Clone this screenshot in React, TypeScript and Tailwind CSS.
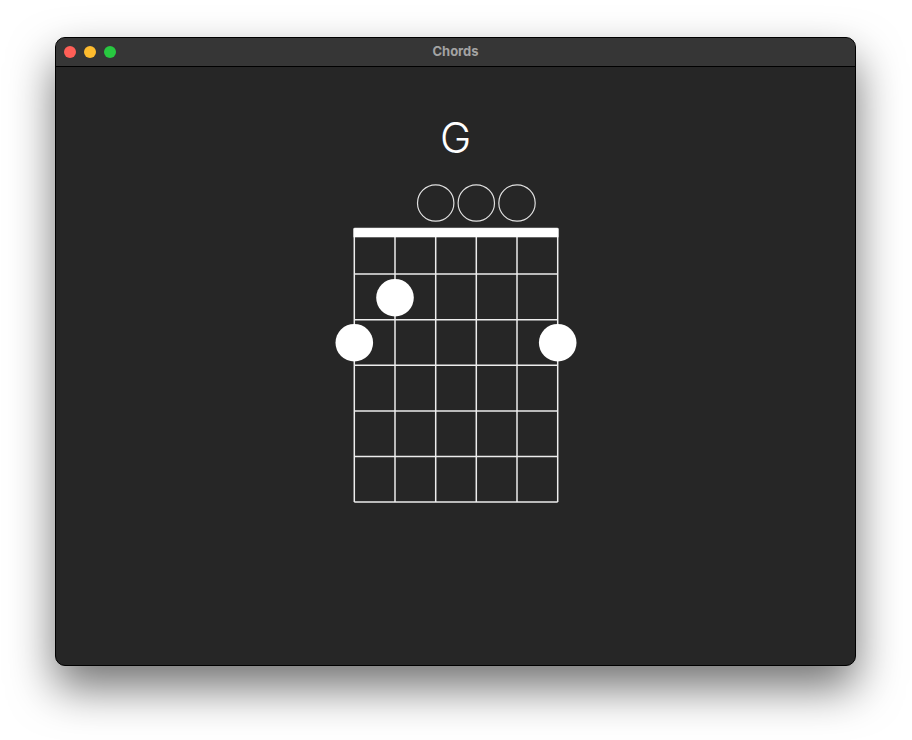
import React from "react";

const strings = [28.3, 69, 109.7, 150.3, 191, 231.7];
const frets = [68.5, 114.1, 159.7, 205.3, 250.9, 296.5, 342.1];

function ChordDiagram() {
  return (
    <svg width="260" height="350" viewBox="0 0 260 350" className="block">
      {strings.map((x, i) => (
        <line key={"s" + i} x1={x} y1={68.5} x2={x} y2={342.1} stroke="#ededed" strokeWidth={1.5} />
      ))}
      {frets.map((y, i) => (
        <line key={"f" + i} x1={28.3} y1={y} x2={231.7} y2={y} stroke="#ededed" strokeWidth={1.5} />
      ))}
      <rect x={27.5} y={68.3} width={205} height={9} fill="#ffffff" />
      {[109.7, 150.3, 191].map((cx, i) => (
        <circle key={"o" + i} cx={cx} cy={43} r={18.2} fill="none" stroke="#e0e0e0" strokeWidth={1.2} />
      ))}
      <circle cx={69} cy={137.7} r={18.8} fill="#ffffff" />
      <circle cx={28.3} cy={182.7} r={18.8} fill="#ffffff" />
      <circle cx={231.7} cy={182.7} r={18.8} fill="#ffffff" />
    </svg>
  );
}

export default function App() {
  return (
    <div className="w-[912px] h-[740px] bg-white pt-[37px] pl-[55px]" style={{ fontFamily: "Inter, 'Liberation Sans', sans-serif" }}>
      <div className="w-[801px] h-[629px] rounded-[10px] border border-black bg-[#262626] overflow-hidden flex flex-col shadow-[0_22px_45px_rgba(0,0,0,0.55)]">
        <div className="h-[29px] bg-[#363636] border-b border-black flex items-center relative shrink-0">
          <div className="flex items-center gap-[8px] pl-[8px]">
            <div className="w-[12px] h-[12px] rounded-full bg-[#ff5f57]" />
            <div className="w-[12px] h-[12px] rounded-full bg-[#febc2e]" />
            <div className="w-[12px] h-[12px] rounded-full bg-[#28c840]" />
          </div>
          <div className="absolute inset-0 flex items-center justify-center text-[13px] font-bold text-[#a3a3a3]">
            Chords
          </div>
        </div>
        <div className="flex-1 flex flex-col items-center">
          <div className="mt-[50px] text-[42px] leading-[42px] font-light text-white">G</div>
          <div className="mt-[1px]">
            <ChordDiagram />
          </div>
        </div>
      </div>
    </div>
  );
}
